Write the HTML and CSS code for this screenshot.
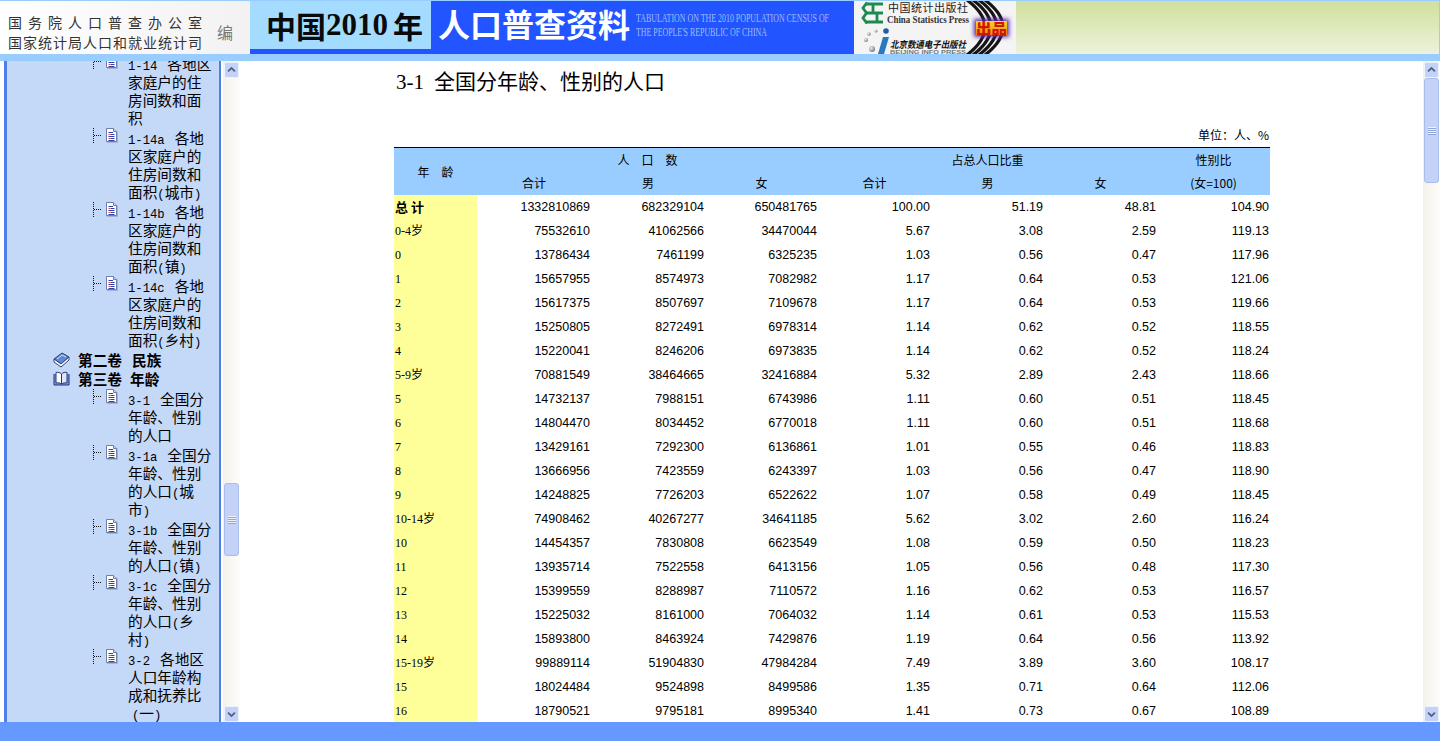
FILE: index.html
```html
<!DOCTYPE html>
<html lang="zh">
<head>
<meta charset="utf-8">
<title>中国2010年人口普查资料</title>
<link rel="stylesheet" href="styles.css">
</head>
<body>
<svg class="defs" width="0" height="0" aria-hidden="true">
  <defs>
    <symbol id="leaf" viewBox="0 0 25 16">
      <path d="M0.5 1V16M1 8.5H9" fill="none" stroke="#111" stroke-dasharray="1 1"/>
      <path d="M14 2.500H22L25 5V16.500H14Z" fill="#a8b2cc"/>
      <path d="M13.500 1.500H20.500L23.500 4.500V14.500H13.500Z" fill="#fff" stroke="#6f7fa8"/>
      <path d="M20.500 1.500V4.500H23.500" fill="#cfd8ee" stroke="#6f7fa8"/>
      <path d="M15.500 5.500H20M15.500 9.500H21.500M15.500 13.500H21.500M17.500 7.500H21.500M17.500 11.500H21.500" stroke="#2a3fb8"/>
      <path d="M15.500 7.500H17.500M15.500 11.500H17.500" stroke="#e4504a"/>
    </symbol>
    <symbol id="chev-up" viewBox="0 0 15 15">
      <path d="M3.500 9L7.500 5.200L11.500 9" fill="none" stroke="#4d6185" stroke-width="2"/>
    </symbol>
    <symbol id="chev-down" viewBox="0 0 15 15">
      <path d="M3.500 6L7.500 9.800L11.500 6" fill="none" stroke="#4d6185" stroke-width="2"/>
    </symbol>
    <symbol id="grip" viewBox="0 0 8 8">
      <path d="M0 .5H8M0 2.500H8M0 4.500H8M0 6.500H8" stroke="#eef2fd"/>
      <path d="M0 1.500H8M0 3.500H8M0 5.500H8M0 7.500H8" stroke="#8ea6dc"/>
    </symbol>
  </defs>
</svg>

<header class="banner">
  <div class="brand">
    <div class="brand-lines">
      <div class="brand-top">国务院人口普查办公室</div>
      <div class="brand-bottom">国家统计局人口和就业统计司</div>
    </div>
    <div class="brand-edit">编</div>
  </div>
  <div class="title-band">
    <div class="title-year"><span class="han">中国</span><span class="digits">2010</span><span class="han year-char">年</span></div>
    <div class="title-name">人口普查资料</div>
    <svg class="title-en" width="198" height="30" viewBox="0 0 198 30">
      <text x="0" y="11" textLength="193" lengthAdjust="spacingAndGlyphs">TABULATION ON THE 2010 POPULATION CENSUS OF</text>
      <text x="0" y="25" textLength="131" lengthAdjust="spacingAndGlyphs">THE PEOPLE'S REPUBLIC OF CHINA</text>
    </svg>
  </div>
  <svg class="logo" width="162" height="53" viewBox="0 0 162 53">
    <defs>
      <filter id="glow" x="-30%" y="-40%" width="160%" height="180%"><feGaussianBlur stdDeviation="2"/></filter>
      <radialGradient id="ball" cx=".35" cy=".35" r=".8"><stop offset="0" stop-color="#eee"/><stop offset="1" stop-color="#667"/></radialGradient>
      <linearGradient id="badge" x1="0" y1="0" x2="0" y2="1"><stop offset="0" stop-color="#f8d820"/><stop offset="1" stop-color="#e88a10"/></linearGradient>
    </defs>
    <rect width="162" height="53" fill="#f4f4f4"/>
    <g fill="none" stroke="#151515" stroke-width="3.2">
      <path d="M113 -1Q149 26 113 54"/>
      <path d="M119 -1Q155 26 119 54"/>
      <path d="M125 -1Q161 26 125 54"/>
      <path d="M131 -1Q167 26 131 54"/>
    </g>
    <g fill="none" stroke="#1f8a50" stroke-width="2.800">
      <path d="M12 3H29M12 12H29M12 21H29"/>
      <path d="M19 3V12M23 12V21"/>
      <path d="M13 1.500L9 7L12.500 12L9 17L13 22.500"/>
    </g>
    <text class="logo-cn" x="34" y="11" textLength="80" lengthAdjust="spacing">中国统计出版社</text>
    <text class="logo-en" x="33" y="22" textLength="82" lengthAdjust="spacingAndGlyphs">China Statistics Press</text>
    <circle cx="12" cy="39" r="2" fill="url(#ball)"/>
    <circle cx="15" cy="33" r="1.800" fill="url(#ball)"/>
    <circle cx="18" cy="48" r="3" fill="url(#ball)"/>
    <circle cx="22" cy="30" r="1.500" fill="url(#ball)"/>
    <circle cx="32" cy="30" r="2.800" fill="#1f5fa8"/>
    <path d="M29 36H35L30 53H24Z" fill="#2b78c2"/>
    <text class="logo-bj" x="36" y="47" textLength="76" lengthAdjust="spacingAndGlyphs">北京数通电子出版社</text>
    <text class="logo-bj-en" x="36" y="52.500" textLength="76" lengthAdjust="spacingAndGlyphs">BEIJING INFO PRESS</text>
    <rect x="120" y="18" width="35" height="18" fill="#5a2aa8" filter="url(#glow)"/>
    <rect x="122" y="20" width="31" height="14" fill="url(#badge)"/>
    <text class="logo-badge" x="122" y="33" textLength="31" lengthAdjust="spacingAndGlyphs">出品</text>
  </svg>
  <div class="banner-fill"></div>
</header>
<div class="strip"></div>

<div class="workspace">
  <nav class="tree-panel">
    <div class="tree">
      <div class="leaf"><svg class="leaf-icon"><use href="#leaf"/></svg><div class="leaf-text"><span class="lat">1-14</span>各地区家庭户的住房间数和面积</div></div>
      <div class="leaf"><svg class="leaf-icon"><use href="#leaf"/></svg><div class="leaf-text"><span class="lat">1-14a</span>各地区家庭户的住房间数和面积<span class="par">(</span>城市<span class="par">)</span></div></div>
      <div class="leaf"><svg class="leaf-icon"><use href="#leaf"/></svg><div class="leaf-text"><span class="lat">1-14b</span>各地区家庭户的住房间数和面积<span class="par">(</span>镇<span class="par">)</span></div></div>
      <div class="leaf"><svg class="leaf-icon"><use href="#leaf"/></svg><div class="leaf-text"><span class="lat">1-14c</span>各地区家庭户的住房间数和面积<span class="par">(</span>乡村<span class="par">)</span></div></div>
      <div class="volume volume-first">
        <svg class="vol-icon" width="17" height="16" viewBox="0 0 17 16"><path d="M1 7L9 1L16 5L8 12Z" fill="#5f88d8" stroke="#2f3f78"/><path d="M1 7V10L8 15L16 8V5L8 12Z" fill="#fff" stroke="#2f3f78"/><path d="M4 7L9 3L13 5" fill="none" stroke="#cfe0fa"/></svg>
        <span>第二卷</span><span class="vol-name">民族</span>
      </div>
      <div class="volume">
        <svg class="vol-icon" width="17" height="16" viewBox="0 0 17 16"><path d="M1 3V14H16V3" fill="#7c9ae0" stroke="#22357a"/><path d="M3 1.500C5 1 7 1.500 8.500 3V13C7 12 5 11.500 3 12Z" fill="#fff" stroke="#22357a"/><path d="M14 1.500C12 1 10 1.500 8.500 3V13C10 12 12 11.500 14 12Z" fill="#dfe8fb" stroke="#22357a"/></svg>
        <span>第三卷</span><span class="vol-name vol-name-tight">年龄</span>
      </div>
      <div class="leaf"><svg class="leaf-icon"><use href="#leaf"/></svg><div class="leaf-text"><span class="lat">3-1</span>全国分年龄、性别的人口</div></div>
      <div class="leaf"><svg class="leaf-icon"><use href="#leaf"/></svg><div class="leaf-text"><span class="lat">3-1a</span>全国分年龄、性别的人口<span class="par">(</span>城市<span class="par">)</span></div></div>
      <div class="leaf"><svg class="leaf-icon"><use href="#leaf"/></svg><div class="leaf-text"><span class="lat">3-1b</span>全国分年龄、性别的人口<span class="par">(</span>镇<span class="par">)</span></div></div>
      <div class="leaf"><svg class="leaf-icon"><use href="#leaf"/></svg><div class="leaf-text"><span class="lat">3-1c</span>全国分年龄、性别的人口<span class="par">(</span>乡村<span class="par">)</span></div></div>
      <div class="leaf"><svg class="leaf-icon"><use href="#leaf"/></svg><div class="leaf-text"><span class="lat">3-2</span>各地区人口年龄构成和抚养比<br><span class="par par-lead">(</span>一<span class="par">)</span></div></div>
    </div>
  </nav>
  <div class="scrollbar">
    <div class="sb-btn"><svg class="sb-chev"><use href="#chev-up"/></svg></div>
    <div class="sb-thumb sb-thumb-tree"><svg class="sb-grip"><use href="#grip"/></svg></div>
    <div class="sb-btn sb-btn-end"><svg class="sb-chev"><use href="#chev-down"/></svg></div>
  </div>

  <main class="doc">
    <div class="sheet">
      <h1 class="doc-title"><span class="doc-no">3-1</span>全国分年龄、性别的人口</h1>
      <div class="unit">单位：人、%</div>
      <table class="data">
        <colgroup>
          <col class="c-age"><col class="c-wide"><col class="c-wide"><col class="c-num"><col class="c-num"><col class="c-num"><col class="c-num"><col class="c-num">
        </colgroup>
        <thead>
          <tr class="head-top">
            <th rowspan="2">年&emsp;龄</th>
            <th colspan="3">人　口　数</th>
            <th colspan="3">占总人口比重</th>
            <th>性别比</th>
          </tr>
          <tr class="head-sub">
            <th>合计</th><th>男</th><th>女</th><th>合计</th><th>男</th><th>女</th><th>(女=100)</th>
          </tr>
        </thead>
        <tbody>
          <tr><th class="age age-total">总 计</th><td>1332810869</td><td>682329104</td><td>650481765</td><td>100.00</td><td>51.19</td><td>48.81</td><td>104.90</td></tr>
          <tr><th class="age">0-4岁</th><td>75532610</td><td>41062566</td><td>34470044</td><td>5.67</td><td>3.08</td><td>2.59</td><td>119.13</td></tr>
          <tr><th class="age">0</th><td>13786434</td><td>7461199</td><td>6325235</td><td>1.03</td><td>0.56</td><td>0.47</td><td>117.96</td></tr>
          <tr><th class="age">1</th><td>15657955</td><td>8574973</td><td>7082982</td><td>1.17</td><td>0.64</td><td>0.53</td><td>121.06</td></tr>
          <tr><th class="age">2</th><td>15617375</td><td>8507697</td><td>7109678</td><td>1.17</td><td>0.64</td><td>0.53</td><td>119.66</td></tr>
          <tr><th class="age">3</th><td>15250805</td><td>8272491</td><td>6978314</td><td>1.14</td><td>0.62</td><td>0.52</td><td>118.55</td></tr>
          <tr><th class="age">4</th><td>15220041</td><td>8246206</td><td>6973835</td><td>1.14</td><td>0.62</td><td>0.52</td><td>118.24</td></tr>
          <tr><th class="age">5-9岁</th><td>70881549</td><td>38464665</td><td>32416884</td><td>5.32</td><td>2.89</td><td>2.43</td><td>118.66</td></tr>
          <tr><th class="age">5</th><td>14732137</td><td>7988151</td><td>6743986</td><td>1.11</td><td>0.60</td><td>0.51</td><td>118.45</td></tr>
          <tr><th class="age">6</th><td>14804470</td><td>8034452</td><td>6770018</td><td>1.11</td><td>0.60</td><td>0.51</td><td>118.68</td></tr>
          <tr><th class="age">7</th><td>13429161</td><td>7292300</td><td>6136861</td><td>1.01</td><td>0.55</td><td>0.46</td><td>118.83</td></tr>
          <tr><th class="age">8</th><td>13666956</td><td>7423559</td><td>6243397</td><td>1.03</td><td>0.56</td><td>0.47</td><td>118.90</td></tr>
          <tr><th class="age">9</th><td>14248825</td><td>7726203</td><td>6522622</td><td>1.07</td><td>0.58</td><td>0.49</td><td>118.45</td></tr>
          <tr><th class="age">10-14岁</th><td>74908462</td><td>40267277</td><td>34641185</td><td>5.62</td><td>3.02</td><td>2.60</td><td>116.24</td></tr>
          <tr><th class="age">10</th><td>14454357</td><td>7830808</td><td>6623549</td><td>1.08</td><td>0.59</td><td>0.50</td><td>118.23</td></tr>
          <tr><th class="age">11</th><td>13935714</td><td>7522558</td><td>6413156</td><td>1.05</td><td>0.56</td><td>0.48</td><td>117.30</td></tr>
          <tr><th class="age">12</th><td>15399559</td><td>8288987</td><td>7110572</td><td>1.16</td><td>0.62</td><td>0.53</td><td>116.57</td></tr>
          <tr><th class="age">13</th><td>15225032</td><td>8161000</td><td>7064032</td><td>1.14</td><td>0.61</td><td>0.53</td><td>115.53</td></tr>
          <tr><th class="age">14</th><td>15893800</td><td>8463924</td><td>7429876</td><td>1.19</td><td>0.64</td><td>0.56</td><td>113.92</td></tr>
          <tr><th class="age">15-19岁</th><td>99889114</td><td>51904830</td><td>47984284</td><td>7.49</td><td>3.89</td><td>3.60</td><td>108.17</td></tr>
          <tr><th class="age">15</th><td>18024484</td><td>9524898</td><td>8499586</td><td>1.35</td><td>0.71</td><td>0.64</td><td>112.06</td></tr>
          <tr><th class="age">16</th><td>18790521</td><td>9795181</td><td>8995340</td><td>1.41</td><td>0.73</td><td>0.67</td><td>108.89</td></tr>
        </tbody>
      </table>
    </div>
  </main>
  <div class="scrollbar">
    <div class="sb-btn"><svg class="sb-chev"><use href="#chev-up"/></svg></div>
    <div class="sb-thumb sb-thumb-doc"><svg class="sb-grip"><use href="#grip"/></svg></div>
    <div class="sb-btn sb-btn-end"><svg class="sb-chev"><use href="#chev-down"/></svg></div>
  </div>
</div>
<footer class="footer"></footer>
</body>
</html>
```
FILE: styles.css
```css
* { box-sizing: border-box; }
html, body { margin: 0; height: 100%; }
body {
  display: flex;
  flex-direction: column;
  height: 741px;
  overflow: hidden;
  background: #fff;
  color: #000;
  font-family: "Noto Sans CJK SC", "Liberation Sans", sans-serif;
}
.defs { position: absolute; }

/* Banner */
.banner {
  display: flex;
  flex: none;
  height: 54px;
  padding-top: 1px;
  background: #99ccff;
}
.brand {
  display: flex;
  flex: none;
  width: 250px;
  padding: 8px 0 0 8px;
  align-items: center;
  background: linear-gradient(90deg, #fff, #f2f2f2);
  color: #333;
}
.brand-lines { width: 209px; font-size: 14px; line-height: 20px; }
.brand-top { letter-spacing: 6px; white-space: nowrap; }
.brand-bottom { letter-spacing: 1px; white-space: nowrap; }
.brand-edit { font-size: 16px; color: #777; }

.title-band {
  display: flex;
  flex: none;
  width: 604px;
  background: #2255ff;
}
.title-year {
  display: flex;
  flex: none;
  align-items: center;
  width: 181px;
  height: 48px;
  padding-left: 16px;
  background: #a3dcff;
  color: #0a0a0a;
  font-weight: 700;
  line-height: 48px;
  white-space: nowrap;
}
.title-year .han { font-size: 30px; }
.digits { font-family: "Liberation Serif", serif; font-size: 31px; }
.year-char { margin-left: 5px; }
.title-name {
  flex: none;
  width: 205px;
  padding-left: 7px;
  color: #fff;
  font-size: 32px;
  font-weight: 700;
  line-height: 44px;
  white-space: nowrap;
}
.title-en { flex: none; margin-top: 10px; }
.title-en text {
  font-family: "Liberation Serif", serif;
  font-size: 12px;
  fill: #9dbcf5;
}

.logo { flex: none; }
.logo-cn { font-size: 11px; fill: #222; }
.logo-en { font-family: "Liberation Serif", serif; font-size: 11px; font-weight: 700; fill: #333; }
.logo-bj { font-size: 9.5px; font-weight: 700; font-style: italic; fill: #111; }
.logo-bj-en { font-family: "Liberation Sans", sans-serif; font-size: 5px; font-weight: 700; fill: #777; }
.logo-badge { font-size: 15px; font-weight: 900; fill: #d41408; }

.banner-fill {
  flex: 1;
  margin-right: 1px;
  background: linear-gradient(180deg, #d0e09c, #edf2dc);
}
.strip { flex: none; height: 7px; background: #99ccff; }

/* Workspace */
.workspace { display: flex; flex: 1; min-height: 0; }

.tree-panel {
  flex: none;
  width: 217px;
  margin: 0 2px 0 4px;
  overflow: hidden;
  background: #c4d8f8;
  border-left: 3px solid #4d7eea;
  border-right: 2px solid #4d7eea;
}
.tree { margin-top: -8px; }
.leaf {
  display: flex;
  gap: 10px;
  padding: 2px 0 0 86px;
  font-size: 14.67px;
  line-height: 18px;
}
.leaf-icon { flex: none; width: 25px; height: 16px; margin-top: -2px; }
.leaf-text { width: 85px; flex: none; }
.lat, .par {
  font-family: "Liberation Mono", monospace;
  font-size: 12.22px;
  line-height: 0;
}
.lat { margin-right: 10px; }
.par-lead { margin-left: 4px; }
.volume {
  display: flex;
  align-items: center;
  height: 19px;
  padding-left: 46px;
  font-size: 14.67px;
  font-weight: 700;
  line-height: 19px;
}
.volume-first { margin-top: 1px; }
.vol-icon { flex: none; margin-right: 8px; }
.vol-name { margin-left: 10px; }
.vol-name-tight { margin-left: 8px; }

/* Scrollbars */
.scrollbar {
  display: flex;
  flex: none;
  flex-direction: column;
  width: 17px;
  padding: 1px 1px 0;
  background: linear-gradient(90deg, #f3f1ea, #fdfdfb);
}
.sb-btn {
  flex: none;
  height: 16px;
  border: 1px solid #eef2fd;
  border-radius: 2px;
  background: #c3d2f6;
}
.sb-btn-end { margin-top: auto; }
.sb-chev { display: block; width: 13px; height: 14px; }
.sb-thumb {
  display: flex;
  flex: none;
  align-items: center;
  justify-content: center;
  border: 1px solid #a9bdea;
  border-radius: 3px;
  background: #c3d2f6;
}
.sb-thumb-tree { height: 73px; margin-top: 405px; }
.sb-thumb-doc { height: 105px; margin-top: 0; }
.sb-grip { display: block; width: 8px; height: 8px; }

/* Document */
.doc { flex: 1; min-width: 0; overflow: hidden; background: #fff; }
.sheet { width: 876px; margin-left: 154px; }
.doc-title {
  margin: 0 0 24px;
  padding-left: 2px;
  font-size: 21px;
  font-weight: 400;
  line-height: 38px;
  white-space: nowrap;
}
.doc-no { margin-right: 10px; font-family: "Liberation Serif", serif; line-height: 0; }
.unit { height: 24px; padding-right: 1px; font-size: 12px; line-height: 24px; text-align: right; }
.data {
  width: 876px;
  table-layout: fixed;
  border-collapse: separate;
  border-spacing: 0;
  font-size: 12px;
}
.c-age { width: 83px; }
.c-wide { width: 114px; }
.c-num { width: 113px; }
.data thead th {
  padding: 0;
  background: #99ccff;
  font-weight: 400;
  line-height: 16px;
  text-align: center;
}
.head-top th { height: 24px; border-top: 1px solid #000; }
.head-sub th { height: 24px; }
.data td {
  height: 24px;
  padding: 0 1px 0 0;
  font-family: "Liberation Sans", sans-serif;
  font-size: 12.5px;
  line-height: 16px;
  text-align: right;
}
.data .age {
  padding: 0 0 0 1px;
  background: #ffff99;
  font-family: "Liberation Serif", "Noto Sans CJK SC", serif;
  font-size: 12px;
  font-weight: 400;
  line-height: 16px;
  text-align: left;
}
.data .age-total { font-family: "Noto Sans CJK SC", sans-serif; font-size: 13px; font-weight: 700; }

.footer { flex: none; height: 19px; background: #6699ff; }
```
